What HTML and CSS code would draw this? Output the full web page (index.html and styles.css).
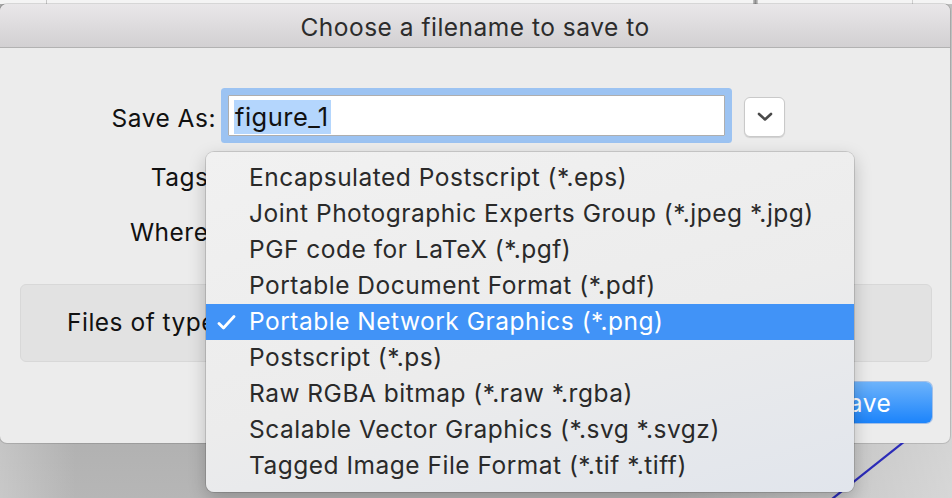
FILE: index.html
```html
<!DOCTYPE html>
<html>
<head>
<meta charset="utf-8">
<link rel="stylesheet" href="styles.css">
</head>
<body>
<div class="page">
  <div class="strip"></div>
  <div class="dialog">
    <div class="titlebar">Choose a filename to save to</div>
    <div class="content">
      <div class="row row-save">
        <div class="label">Save As:</div>
        <div class="field"><span class="sel">figure_1</span></div>
        <div class="disclose">
          <svg width="16" height="10" viewBox="0 0 16 10"><path d="M2 2 L8 7.5 L14 2" fill="none" stroke="#4a4a4a" stroke-width="2.6" stroke-linecap="round" stroke-linejoin="round"/></svg>
        </div>
      </div>
      <div class="row row-tags">
        <div class="label">Tags:</div>
      </div>
      <div class="row row-where">
        <div class="label">Where:</div>
      </div>
      <div class="panel">
        <div class="panel-label">Files of type:</div>
      </div>
      <div class="buttons">
        <div class="btn-cancel">Cancel</div>
        <div class="btn-save">Save</div>
      </div>
    </div>
  </div>
  <div class="below">
    <svg class="plotline" width="952" height="55" viewBox="0 0 952 55"><path d="M905 -2 L832 56" stroke="#2b2bb8" stroke-width="2.2" fill="none"/></svg>
  </div>

  <div class="menu">
    <div class="item"><span class="check"></span><span>Encapsulated Postscript (*.eps)</span></div>
    <div class="item"><span class="check"></span><span>Joint Photographic Experts Group (*.jpeg *.jpg)</span></div>
    <div class="item"><span class="check"></span><span>PGF code for LaTeX (*.pgf)</span></div>
    <div class="item"><span class="check"></span><span>Portable Document Format (*.pdf)</span></div>
    <div class="item selected"><span class="check"><svg width="19" height="15" viewBox="0 0 19 15"><path d="M2 8.5 L6.5 13 L17 1.5" fill="none" stroke="#ffffff" stroke-width="2.8" stroke-linecap="round" stroke-linejoin="round"/></svg></span><span>Portable Network Graphics (*.png)</span></div>
    <div class="item"><span class="check"></span><span>Postscript (*.ps)</span></div>
    <div class="item"><span class="check"></span><span>Raw RGBA bitmap (*.raw *.rgba)</span></div>
    <div class="item"><span class="check"></span><span>Scalable Vector Graphics (*.svg *.svgz)</span></div>
    <div class="item"><span class="check"></span><span>Tagged Image File Format (*.tif *.tiff)</span></div>
  </div>
</div>
</body>
</html>
```

FILE: styles.css
```css
* { box-sizing: border-box; }
html, body { margin: 0; padding: 0; }
body {
  width: 952px;
  height: 498px;
  overflow: hidden;
  font-family: Inter, "Liberation Sans", Arial, sans-serif;
  color: #1a1a1a;
  letter-spacing: 0.5px;
}
.page {
  position: relative;
  width: 952px;
  height: 498px;
  display: flex;
  flex-direction: column;
  background:
    linear-gradient(to right, rgba(255,255,255,0.25) 0, rgba(255,255,255,0) 8%, rgba(255,255,255,0) 70%, rgba(255,255,255,0.45) 100%),
    linear-gradient(to bottom, #8a8a8a 0, #a6a6a6 60%, #b6b6b6 100%);
}
.strip {
  height: 4px;
  flex: none;
  background:
    linear-gradient(#c6c6c6, #c6c6c6) 46px 0 / 1px 100% no-repeat,
    linear-gradient(to right, #c4c4c4, #8e8e8e, #d0d0d0) 753px 0 / 5px 100% no-repeat,
    linear-gradient(#cfcfcf, #cfcfcf) 912px 0 / 1px 100% no-repeat,
    #f4f4f4;
}
.dialog {
  flex: none;
  width: 950px;
  height: 439px;
  background: #ececec;
  border-radius: 7px;
  box-shadow: 0 0 0 1px rgba(0,0,0,0.12);
  overflow: hidden;
  display: flex;
  flex-direction: column;
}
.titlebar {
  flex: none;
  height: 44px;
  border-bottom: 1px solid #b2b2b2;
  background: linear-gradient(to bottom, #e9e7e9, #d2d0d2);
  color: #2c2c2c;
  font-size: 24.5px;
  display: flex;
  align-items: center;
  justify-content: center;
  padding-top: 2px;
}
.content {
  flex: 1;
  padding: 47px 18px 19px 20px;
  display: flex;
  flex-direction: column;
}
.row {
  display: flex;
  align-items: center;
  font-size: 24.5px;
}
.label {
  width: 196px;
  text-align: right;
  color: #111;
}
.row-save .label { padding-top: 4px; }
.row-save { height: 41px; }
.field {
  margin-left: 12px;
  width: 497px;
  height: 41px;
  background: #fff;
  border: 1px solid #aeaeae;
  border-radius: 1px;
  box-shadow: 0 0 0 7px #9cc3f2;
  display: flex;
  align-items: center;
  padding-left: 5px;
  padding-top: 2px;
  font-size: 25.5px;
}
.sel {
  background: #b4d6fd;
  padding: 1px 2px 2px 1px;
  color: #111;
}
.disclose {
  margin-left: 19px;
  margin-top: 3px;
  width: 41px;
  height: 40px;
  background: #fff;
  border: 1px solid #c9c9c9;
  border-radius: 6px;
  box-shadow: 0 1px 1px rgba(0,0,0,0.12);
  display: flex;
  align-items: center;
  justify-content: center;
}
.row-tags { height: 40px; margin-top: 21px; }
.row-where { height: 40px; margin-top: 15px; }
.panel {
  margin-top: 32px;
  height: 78px;
  background: #e2e2e2;
  border: 1px solid #d8d8d8;
  border-radius: 6px;
  display: flex;
  align-items: center;
  padding-left: 46px;
  padding-bottom: 3px;
  font-size: 24.5px;
  color: #111;
}
.buttons {
  margin-top: 20px;
  display: flex;
  justify-content: flex-end;
  gap: 20px;
}
.btn-cancel, .btn-save {
  height: 41px;
  width: 142px;
  border-radius: 6px;
  display: flex;
  align-items: center;
  justify-content: center;
  font-size: 24.5px;
}
.btn-cancel {
  background: #fff;
  border: 1px solid #c8c8c8;
}
.btn-save {
  background: linear-gradient(to bottom, #6db3fb, #1c84fb);
  color: #fff;
  box-shadow: 0 0 0 1px rgba(30,110,220,0.35);
  padding-left: 2px;
}
.below {
  flex: 1;
  position: relative;
}
.plotline {
  display: block;
}
.menu {
  position: absolute;
  left: 206px;
  top: 152px;
  width: 648px;
  height: 340px;
  padding: 8px 0;
  border-radius: 8px;
  background: linear-gradient(165deg, #f1f1f1 0%, #ececec 55%, #e1e5ec 100%);
  box-shadow: 0 0 0 1px rgba(0,0,0,0.13), 0 6px 18px rgba(0,0,0,0.22);
}
.item {
  height: 36px;
  display: flex;
  align-items: center;
  padding-left: 11px;
  padding-bottom: 2px;
  font-size: 24.5px;
  color: #2a2a2a;
}
.check {
  width: 32px;
  display: flex;
  align-items: center;
  padding-top: 2px;
}
.item.selected {
  background: #4193f7;
  color: #fff;
}
```
